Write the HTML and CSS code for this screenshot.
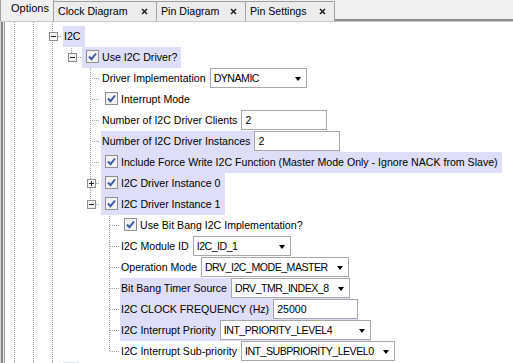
FILE: index.html
```html
<!DOCTYPE html>
<html lang="en">
<head>
  <meta charset="UTF-8">
  <title>Options</title>
  <link rel="stylesheet" href="styles.css">
</head>
<body>

<!-- tab strip -->
<div class="tabs">
  <div class="tab active">Options</div>
  <div class="tab t103">Clock Diagram <svg class="x" width="7" height="7" viewBox="0 0 7 7"><path d="M1 1L6 6M6 1L1 6"/></svg></div>
  <div class="tab t89">Pin Diagram <svg class="x" width="7" height="7" viewBox="0 0 7 7"><path d="M1 1L6 6M6 1L1 6"/></svg></div>
  <div class="tab t89">Pin Settings <svg class="x" width="7" height="7" viewBox="0 0 7 7"><path d="M1 1L6 6M6 1L1 6"/></svg></div>
</div>

<!-- option tree -->
<div class="panel">
  <div class="tree">

    <div class="row">
      <span class="g line"></span><span class="g line"></span><span class="g line"></span>
    </div>

    <div class="row">
      <span class="g line"></span><span class="g line"></span>
      <span class="g tee"><svg class="exp" viewBox="0 0 9 9"><rect x="0.5" y="0.5" width="8" height="8"/><path d="M2 4.5H7"/></svg></span>
      <span class="node hl">I2C</span>
    </div>

    <div class="row">
      <span class="g line"></span><span class="g line"></span><span class="g line"></span>
      <span class="g corner"><svg class="exp" viewBox="0 0 9 9"><rect x="0.5" y="0.5" width="8" height="8"/><path d="M2 4.5H7"/></svg></span>
      <span class="node chk hl"><svg class="cb" viewBox="0 0 13 13"><rect x="0.5" y="0.5" width="12" height="12"/><path d="M3 6.5L5.5 9.2L10 3.5"/></svg>Use I2C Driver?</span>
    </div>

    <div class="row">
      <span class="g line"></span><span class="g line"></span><span class="g line"></span><span class="g"></span><span class="g tee"></span>
      <span class="node">Driver Implementation<span class="combo w97">DYNAMIC<i></i></span></span>
    </div>

    <div class="row">
      <span class="g line"></span><span class="g line"></span><span class="g line"></span><span class="g"></span><span class="g tee"></span>
      <span class="node chk"><svg class="cb" viewBox="0 0 13 13"><rect x="0.5" y="0.5" width="12" height="12"/><path d="M3 6.5L5.5 9.2L10 3.5"/></svg>Interrupt Mode</span>
    </div>

    <div class="row">
      <span class="g line"></span><span class="g line"></span><span class="g line"></span><span class="g"></span><span class="g tee"></span>
      <span class="node">Number of I2C Driver Clients<span class="field w86">2</span></span>
    </div>

    <div class="row">
      <span class="g line"></span><span class="g line"></span><span class="g line"></span><span class="g"></span><span class="g tee"></span>
      <span class="node hl tight">Number of I2C Driver Instances<span class="field w86">2</span></span>
    </div>

    <div class="row">
      <span class="g line"></span><span class="g line"></span><span class="g line"></span><span class="g"></span><span class="g tee"></span>
      <span class="node chk hl"><svg class="cb" viewBox="0 0 13 13"><rect x="0.5" y="0.5" width="12" height="12"/><path d="M3 6.5L5.5 9.2L10 3.5"/></svg>Include Force Write I2C Function (Master Mode Only - Ignore NACK from Slave)</span>
    </div>

    <div class="row">
      <span class="g line"></span><span class="g line"></span><span class="g line"></span><span class="g"></span>
      <span class="g tee"><svg class="exp" viewBox="0 0 9 9"><rect x="0.5" y="0.5" width="8" height="8"/><path d="M2 4.5H7M4.5 2V7"/></svg></span>
      <span class="node chk hl"><svg class="cb" viewBox="0 0 13 13"><rect x="0.5" y="0.5" width="12" height="12"/><path d="M3 6.5L5.5 9.2L10 3.5"/></svg>I2C Driver Instance 0</span>
    </div>

    <div class="row">
      <span class="g line"></span><span class="g line"></span><span class="g line"></span><span class="g"></span>
      <span class="g corner"><svg class="exp" viewBox="0 0 9 9"><rect x="0.5" y="0.5" width="8" height="8"/><path d="M2 4.5H7"/></svg></span>
      <span class="node chk hl"><svg class="cb" viewBox="0 0 13 13"><rect x="0.5" y="0.5" width="12" height="12"/><path d="M3 6.5L5.5 9.2L10 3.5"/></svg>I2C Driver Instance 1</span>
    </div>

    <div class="row">
      <span class="g line"></span><span class="g line"></span><span class="g line"></span><span class="g"></span><span class="g"></span><span class="g tee"></span>
      <span class="node chk"><svg class="cb" viewBox="0 0 13 13"><rect x="0.5" y="0.5" width="12" height="12"/><path d="M3 6.5L5.5 9.2L10 3.5"/></svg>Use Bit Bang I2C Implementation?</span>
    </div>

    <div class="row">
      <span class="g line"></span><span class="g line"></span><span class="g line"></span><span class="g"></span><span class="g"></span><span class="g tee"></span>
      <span class="node">I2C Module ID<span class="combo w98">I2C_ID_1<i></i></span></span>
    </div>

    <div class="row">
      <span class="g line"></span><span class="g line"></span><span class="g line"></span><span class="g"></span><span class="g"></span><span class="g tee"></span>
      <span class="node">Operation Mode<span class="combo w148">DRV_I2C_MODE_MASTER<i></i></span></span>
    </div>

    <div class="row">
      <span class="g line"></span><span class="g line"></span><span class="g line"></span><span class="g"></span><span class="g"></span><span class="g tee"></span>
      <span class="node hl tight">Bit Bang Timer Source<span class="combo w119">DRV_TMR_INDEX_8<i></i></span></span>
    </div>

    <div class="row">
      <span class="g line"></span><span class="g line"></span><span class="g line"></span><span class="g"></span><span class="g"></span><span class="g tee"></span>
      <span class="node hl tight">I2C CLOCK FREQUENCY (Hz)<span class="field w85">25000</span></span>
    </div>

    <div class="row">
      <span class="g line"></span><span class="g line"></span><span class="g line"></span><span class="g"></span><span class="g"></span><span class="g tee"></span>
      <span class="node hl tight">I2C Interrupt Priority<span class="combo w151">INT_PRIORITY_LEVEL4<i></i></span></span>
    </div>

    <div class="row">
      <span class="g line"></span><span class="g line"></span><span class="g line"></span><span class="g"></span><span class="g"></span><span class="g corner"></span>
      <span class="node">I2C Interrupt Sub-priority<span class="combo w154">INT_SUBPRIORITY_LEVEL0<i></i></span></span>
    </div>

    <!-- next sibling, scrolled just into view -->
    <div class="row">
      <span class="g line"></span><span class="g line"></span>
      <span class="g tee"><svg class="exp" viewBox="0 0 9 9"><rect x="0.5" y="0.5" width="8" height="8"/><path d="M2 4.5H7M4.5 2V7"/></svg></span>
      <span class="node hl stub"></span>
    </div>

  </div>
</div>

</body>
</html>
```

FILE: styles.css
```css
* { box-sizing: border-box; }
body {
  margin: 0;
  width: 513px;
  height: 363px;
  overflow: hidden;
  background: #fff;
  color: #000;
  font: 10.6px "Liberation Sans", Tahoma, sans-serif;
}

/* tab strip */
.tabs {
  display: flex;
  align-items: flex-end;
  height: 22px;
  background: #f0f0f0;
  border-bottom: 1px solid #c8c8c8;
  box-shadow: inset 0 -2px 0 #8c8c8c;
}
.tab {
  display: flex;
  align-items: center;
  height: 20px;
  padding: 0 8px 1px 4px;
  background: #ececec;
  border: 1px solid #a0a0a0;
  border-bottom: none;
  border-left: none;
}
.tab .x { margin-left: auto; stroke: #222; stroke-width: 1.6; fill: none; }
.tab.active {
  width: 54px;
  height: 22px;
  padding: 0 0 5px 10px;
  background: #f0f0f0;
  border-left: 1px solid #a0a0a0;
  font-size: 11px;
}
.t103 { width: 103px; }
.t89 { width: 89px; }

/* panel with the double left edge */
.panel {
  height: 341px;
  overflow: hidden;
  padding-left: 5px;
  background: linear-gradient(to right, #d4d4d4 0 1px, #858585 1px 3px, #e6e6e6 3px 4px, #a0a0a0 4px 5px, #fff 5px);
}
.tree { margin-top: -17px; }

/* one tree row */
.row { display: flex; height: 21px; }
.g {
  position: relative;
  flex: none;
  width: 19px;
  height: 21px;
  display: flex;
  align-items: flex-start;
  justify-content: center;
}
.g::before, .g::after { content: ""; position: absolute; }
.line::before, .tee::before, .corner::before {
  left: 9px; top: 0; width: 1px; height: 21px;
  background: repeating-linear-gradient(to bottom, #a0a0a0 0 1px, transparent 1px 2px) fixed;
}
.corner::before { height: 11px; }
.tee::after, .corner::after {
  left: 10px; top: 10px; width: 9px; height: 1px;
  background: repeating-linear-gradient(to right, #a0a0a0 0 1px, transparent 1px 2px) fixed;
}

/* expander box */
.exp {
  position: relative;
  z-index: 1;
  width: 9px;
  height: 9px;
  margin-top: 6px;
  margin-left: 1px;
}
.exp rect { fill: #f4f4f4; stroke: #8e8e8e; }
.exp path { stroke: #222; stroke-width: 1; }

/* node content */
.node {
  display: flex;
  align-items: flex-start;
  height: 21px;
  margin-left: 1px;
  padding: 4px 4px 0 1px;
  white-space: nowrap;
}
.node.hl { background: #dedef8; }
.node.tight { padding-right: 0; }
.node.stub { width: 16px; }
.chk { padding-left: 4px; padding-top: 4px; }
.cb { width: 13px; height: 13px; margin: -1px 3px 0 0; flex: none; }
.cb rect { fill: #f2f2f2; stroke: #8f8f8f; }
.cb path { fill: none; stroke: #3c5aa5; stroke-width: 2; }

/* inline editors */
.field, .combo {
  position: relative;
  display: flex;
  align-items: center;
  height: 20px;
  margin: -4px 0 0 4px;
  padding-left: 3px;
  background: #fff;
  border: 1px solid #a8a8a8;
}
.combo { letter-spacing: -0.5px; }
.combo i {
  position: absolute;
  right: 5px;
  top: 8px;
  border: 3.5px solid transparent;
  border-top: 4px solid #000;
  border-bottom: none;
}
.w85 { width: 85px; }
.w86 { width: 86px; }
.w97 { width: 97px; }
.w98 { width: 98px; }
.w119 { width: 119px; }
.w148 { width: 148px; }
.w151 { width: 151px; }
.w154 { width: 154px; }
```
